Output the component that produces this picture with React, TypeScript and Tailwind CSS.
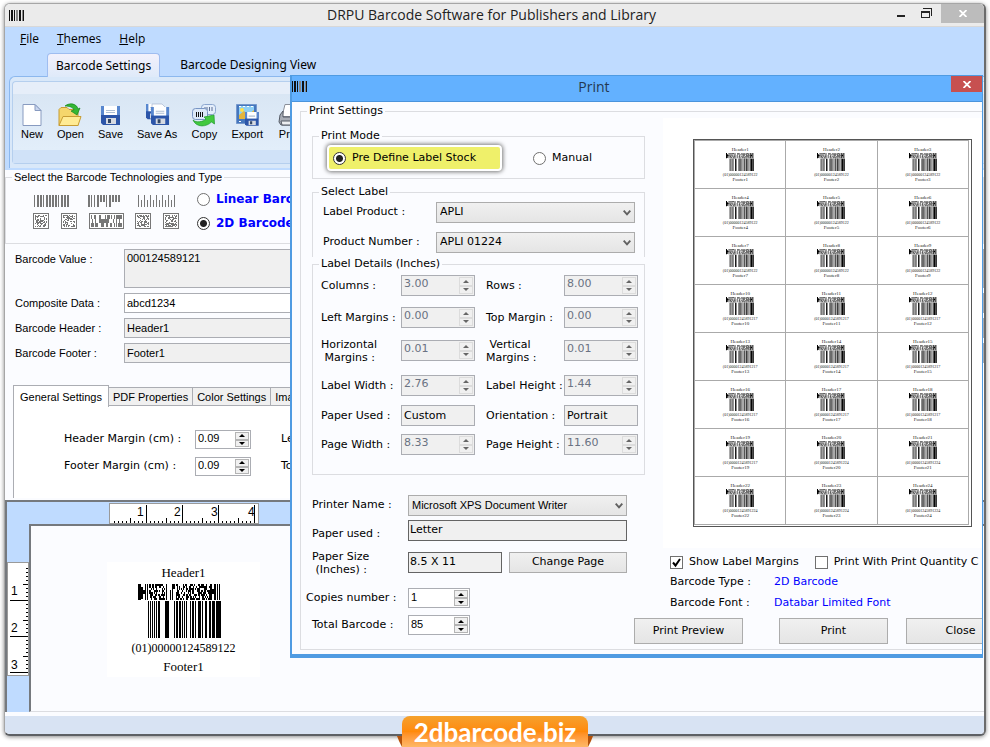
import { useId } from 'react';
import type { ReactNode } from 'react';

// Small deterministic generator so bars and modules stay the same on every render
function sequence(seed: number, count: number) {
  let state = seed * 7919;
  return Array.from({ length: count }, () => {
    state = (state * 16807) % 2147483647;
    return state / 2147483647;
  });
}

function Modules({ seed, cols, rows, x = 0, y = 0, w, h }: { seed: number; cols: number; rows: number; x?: number; y?: number; w: number; h: number }) {
  const cells = sequence(seed, cols * rows);
  return (
    <>
      {cells.map((value, i) =>
        value > 0.45 ? (
          <rect key={i} x={x + (i % cols) * (w / cols)} y={y + Math.floor(i / cols) * (h / rows)} width={w / cols} height={h / rows} />
        ) : null
      )}
    </>
  );
}

const linearBars = [
  [0, 1], [2, 1], [4, 1], [6, 1], [8, 1], [10, 2], [17, 4], [26, 1], [28, 2], [31, 2], [34, 1], [36, 1],
  [38, 1], [42, 1], [44, 2], [47, 1], [50, 3], [54, 1], [57, 2], [61, 2], [64, 3], [68, 4], [72, 1],
];

function CompositeBarcode({ className }: { className: string }) {
  return (
    <svg viewBox="0 0 83 54" preserveAspectRatio="none" className={className} aria-hidden="true">
      <path d="M0 0h3v3h2v3h2v-6h1v16h-1v-6h-2v5h-2v1h-3zM9 0h1v16h-1zM72 0h2v5h2v-5h2v16h-2v-6h-2v6h-2zM79 0h1v16h-1zM81 0h1v16h-1z" />
      <Modules seed={91} cols={16} rows={8} x={11} w={16} h={16} />
      <path d="M28 0h1v16h-1zM32 6h1v10h-1zM34 0h3v5h-2v11h-1z" />
      <Modules seed={44} cols={34} rows={8} x={38} w={34} h={16} />
      {linearBars.map(([x, w]) => (
        <rect key={x} x={x + 10} y={17} width={w} height={37} />
      ))}
    </svg>
  );
}

function AppMark() {
  return (
    <svg width="16" height="11" viewBox="0 0 16 11" shapeRendering="crispEdges" aria-hidden="true">
      <path d="M0 0h1v11h-1zM2 0h2v11h-2zM5 0h1v11h-1zM10 0h2v11h-2zM14 0h1v11h-1z" fill="#111" />
      <path d="M7 0h2v11h-2zM13 0h1v11h-1z" fill="#888" />
    </svg>
  );
}

function Group({ title, className, children }: { title: string; className: string; children: ReactNode }) {
  return (
    <fieldset className={`min-w-0 border-[#dcdde1] ${className}`}>
      <legend className="ml-1.5 px-0.5 leading-[14px] whitespace-nowrap">{title}</legend>
      {children}
    </fieldset>
  );
}

function Spinner({ id, value, className, disabled = false }: { id: string; value: string; className: string; disabled?: boolean }) {
  return (
    <div className={`flex border border-[#abadb3] ${disabled ? 'bg-[#f0f0f0] text-gray-500' : 'bg-white text-black'} ${className}`}>
      <input id={id} defaultValue={value} disabled={disabled} className="min-w-0 flex-1 pb-0.5 pl-0.5 outline-none" />
      <span className="my-px mr-px flex w-3.5 flex-col">
        {['M1 4 4 1 7 4z', 'M1 1 7 1 4 4z'].map((d, i) => (
          <button
            key={d}
            type="button"
            disabled={disabled}
            aria-label={i ? 'Decrease' : 'Increase'}
            className={`flex flex-1 items-center justify-center border bg-[#f0f0f0] ${disabled ? 'border-[#dcdcdc]' : 'border-[#b4b4b4]'}`}
          >
            <svg width="8" height="5" viewBox="0 0 8 5" aria-hidden="true">
              <path d={d} fill={disabled ? '#666' : '#000'} />
            </svg>
          </button>
        ))}
      </span>
    </div>
  );
}

function Dropdown({ id, value, className }: { id: string; value: string; className: string }) {
  return (
    <div className={`relative ${className}`}>
      <select id={id} className="h-full w-full appearance-none border border-[#acacac] bg-linear-to-b from-[#f0f0f0] to-[#e5e5e5] pl-[3px] outline-none">
        <option>{value}</option>
      </select>
      <svg className="pointer-events-none absolute top-2 right-1" width="8" height="6" viewBox="0 0 8 6" aria-hidden="true">
        <path d="M.7 .7 4 4.300 7.300 .7" fill="none" stroke="#606060" strokeWidth="1.900" />
      </svg>
    </div>
  );
}

function Radio({ name, checked = false }: { name: string; checked?: boolean }) {
  return (
    <input
      type="radio"
      name={name}
      defaultChecked={checked}
      className="size-[13px] shrink-0 appearance-none rounded-full border border-[#707070] bg-white checked:border-[#333] checked:bg-[radial-gradient(circle,#222_0_3px,transparent_4px)]"
    />
  );
}

function Floppy({ x = 0, y = 0, s = 1 }: { x?: number; y?: number; s?: number }) {
  return (
    <g transform={`translate(${x} ${y}) scale(${s})`}>
      <path d="M0 0h19v19H2l-2-2z" fill="#2c55a8" />
      <path d="M0 0h19v9H0z" fill="#5887cf" />
      <path d="M3 0h13v9H3z" fill="#fff" />
      <path d="M5 4h9v1H5zM5 6h9v1H5z" fill="#aebfd4" />
      <path d="M5 12h10v6H5z" fill="#d6dae2" />
      <path d="M7 13h3v4H7z" fill="#334766" />
    </g>
  );
}

function NewIcon() {
  return (
    <svg width="22" height="24" viewBox="0 0 22 24" aria-hidden="true">
      <path d="M2 1.500h12l6 6V22.500H2z" fill="#fff" stroke="#889bc0" />
      <path d="M14 1.500v6h6z" fill="#c8d5ee" stroke="#889bc0" />
    </svg>
  );
}

function OpenIcon() {
  return (
    <svg width="26" height="24" viewBox="0 0 26 24" aria-hidden="true">
      <path d="M2 22.500V6.500l2-2h6l2 2h9v16z" fill="#f5d66c" stroke="#c79c33" />
      <path d="M2 22.500 6 13.500h18l-3 9z" fill="#ffeb94" stroke="#c79c33" />
      <path d="M8 3c5-4 12-2 13 3l2-1-3 7-6-4 3-1c-1-3-5-4-9-4z" fill="#35b734" stroke="#16871d" strokeWidth=".7" />
    </svg>
  );
}

function SaveIcon() {
  return (
    <svg width="24" height="24" viewBox="0 0 24 24" aria-hidden="true">
      <Floppy x={3} y={3} />
    </svg>
  );
}

function SaveAsIcon() {
  return (
    <svg width="26" height="24" viewBox="0 0 26 24" aria-hidden="true">
      <Floppy x={2} y={1} s={0.8} />
      <path d="M8 1h10l3 3v5H8z" fill="#fff" stroke="#a8b6ce" strokeWidth=".7" />
      <Floppy x={7} y={4} s={0.95} />
    </svg>
  );
}

function CopyIcon() {
  return (
    <svg width="26" height="24" viewBox="0 0 26 24" aria-hidden="true">
      <rect x="10.500" y="1.500" width="14" height="10" rx="3" fill="#e4eefb" stroke="#8ba6cf" />
      <path d="M14 4v4M16 4v4M18.500 4v4M21 4v4" stroke="#5c6f93" />
      <rect x="1.500" y="5.500" width="15" height="11" rx="3" fill="#dbe8f8" stroke="#7895c4" />
      <path d="M5.500 9v5M7.500 9v5M9.500 9v5M11.500 9v5" stroke="#111" />
      <path d="M2 17c3 3 10 2 13-1l-2-2 10-2 .5 9-3-2c-5 5-15 6-18.500-2z" fill="#43c93f" stroke="#1f9a2d" strokeWidth=".7" />
    </svg>
  );
}

function ExportIcon() {
  return (
    <svg width="24" height="24" viewBox="0 0 24 24" aria-hidden="true">
      <path d="M1.500 1.500h20v19h-20z" fill="#4576bd" stroke="#7598cd" />
      <path d="M4 3h15v13H4z" fill="#8fd0f5" />
      <circle cx="7" cy="7" r="2" fill="#ffe14a" />
      <path d="M4 12l5-4 4 4 6-5v9H4z" fill="#e3b53d" />
      <path d="M4 3h2v1H4zM8 3h2v1H8zM12 3h2v1h-2zM16 3h2v1h-2zM4 18h2v1H4z" fill="#fff" />
      <Floppy x={10} y={9} s={0.72} />
    </svg>
  );
}

function PrinterIcon() {
  return (
    <svg width="26" height="24" viewBox="0 0 26 24" aria-hidden="true">
      <path d="M8 1.500h12l-1 12H5z" fill="#fff" stroke="#8a8f99" />
      <path d="M3 12l3-4v6h14l4-2v7l-3 3H4l-2-3z" fill="#a8adb6" stroke="#555b66" />
      <path d="M4 18h17l-1 4H5z" fill="#eceef1" stroke="#555b66" />
    </svg>
  );
}

const tools = [
  { label: 'New', Icon: NewIcon },
  { label: 'Open', Icon: OpenIcon },
  { label: 'Save', Icon: SaveIcon },
  { label: 'Save As', Icon: SaveAsIcon },
  { label: 'Copy', Icon: CopyIcon },
  { label: 'Export', Icon: ExportIcon },
  { label: 'Print', Icon: PrinterIcon },
];

function Ribbon() {
  return (
    <div className="bg-[#bfdbff] pb-0.5 pl-1">
      <div className="h-[92px] rounded-tl-md border-t border-l border-[#8cb8ee] bg-[#d9e8f9] pt-1 pl-0.5">
        <div className="h-[83px] rounded-l-sm border border-r-0 border-[#b5cfee] bg-linear-to-b from-[#e6eef9] from-[12px] via-[#d9e6f4] via-[12px] to-[#e2eefa] to-[67px]">
          <div className="h-[68px] overflow-hidden pt-[21px] pl-2">
            <div className="flex gap-[14px] font-['Liberation_Sans',sans-serif] text-[11px]">
              {tools.map(({ label, Icon }) => (
                <button key={label} type="button" className="flex shrink-0 flex-col items-center leading-[15px]">
                  <Icon />
                  {label}
                </button>
              ))}
            </div>
          </div>
          <div className="h-[13px] bg-[#d0e2f8]" />
        </div>
      </div>
    </div>
  );
}

function SampleLinear({ seed, width, style }: { seed: number; width: number; style: 'full' | 'mixed' | 'post' }) {
  const heights = sequence(seed, Math.floor(width / 3));
  return (
    <svg width={width} height="12" shapeRendering="crispEdges" fill="#777" aria-hidden="true">
      {heights.map((value, i) => {
        const short = style === 'full' ? false : style === 'mixed' ? value > 0.5 : i % 2 === 1;
        const h = short ? 7 : 12;
        return <rect key={i} x={i * 3} y={style === 'post' ? 12 - h : 0} width={style !== 'post' && value > 0.4 ? 2 : 1} height={h} />;
      })}
    </svg>
  );
}

function SampleMatrix({ seed, width }: { seed: number; width: number }) {
  return (
    <svg width={width} height="16" shapeRendering="crispEdges" fill="#777" aria-hidden="true">
      <rect x=".5" y=".5" width={width - 1} height="15" fill="#fff" stroke="#777" />
      <Modules seed={seed} cols={width - 4} rows={width > 20 ? 3 : 12} x={2} y={2} w={width - 4} h={12} />
    </svg>
  );
}

const dataFields = [
  { label: 'Composite Data :', value: 'abcd1234', tone: 'bg-white' },
  { label: 'Barcode Header :', value: 'Header1', tone: 'bg-[#f0f0f0]' },
  { label: 'Barcode Footer :', value: 'Footer1', tone: 'bg-[#f0f0f0]' },
];

function BarcodeForm() {
  const id = useId();
  return (
    <div className="font-['Liberation_Sans',sans-serif] text-[11px]">
      <Group title="Select the Barcode Technologies and Type" className="h-[74px] border">
        <div className="flex gap-[18px] pt-[7px] pl-[27px]">
          <div className="flex w-[146px] flex-col gap-1.5 pt-1">
            <div className="flex justify-between pl-px">
              <SampleLinear seed={3} width={37} style="full" />
              <SampleLinear seed={8} width={34} style="mixed" />
              <SampleLinear seed={5} width={41} style="post" />
            </div>
            <div className="flex justify-between">
              <SampleMatrix seed={11} width={16} />
              <SampleMatrix seed={12} width={16} />
              <SampleMatrix seed={13} width={35} />
              <SampleMatrix seed={14} width={16} />
              <SampleMatrix seed={15} width={16} />
            </div>
          </div>
          <div className="flex flex-col gap-2 font-['DejaVu_Sans',sans-serif] text-xs leading-4 font-bold text-[#0000ff]">
            <label className="flex items-center gap-1.5"><Radio name="technology" />Linear Barcode</label>
            <label className="flex items-center gap-1.5"><Radio name="technology" checked />2D Barcode</label>
          </div>
        </div>
      </Group>
      <div className="flex flex-col gap-[5px] pt-[5px] pl-2.5">
        <div className="flex h-[39px]">
          <label htmlFor={`${id}-value`} className="w-[109px] shrink-0 pt-0.5">Barcode Value :</label>
          <textarea id={`${id}-value`} defaultValue="000124589121" className="flex-1 resize-none border border-[#abadb3] bg-[#f0f0f0] pl-0.5 leading-[17px] outline-none" />
        </div>
        {dataFields.map((field) => (
          <div key={field.label} className="flex h-5 items-center">
            <label htmlFor={`${id}-${field.value}`} className="w-[109px] shrink-0">{field.label}</label>
            <input id={`${id}-${field.value}`} defaultValue={field.value} className={`h-full flex-1 border border-[#abadb3] pl-0.5 outline-none ${field.tone}`} />
          </div>
        ))}
      </div>
    </div>
  );
}

function SettingsTabs() {
  const id = useId();
  return (
    <div className="pt-[22px] pl-2">
      <div className="flex items-end font-['Liberation_Sans',sans-serif] text-[11px] leading-4">
        <button type="button" className="relative z-10 -mb-px h-[22px] border border-b-0 border-[#abadb3] bg-white px-[6px]">General Settings</button>
        {['PDF Properties', 'Color Settings', 'Image'].map((tab) => (
          <button key={tab} type="button" className="h-[19px] border border-l-0 border-[#abadb3] bg-[#f0f0f0] px-1">{tab}</button>
        ))}
      </div>
      <div className="flex h-[92px] flex-col gap-2 border-l border-[#abadb3] bg-white pt-6 pl-[50px] text-[11px]">
        {[['Header Margin (cm) :', 'Le'], ['Footer Margin (cm) :', 'To']].map(([label, next]) => (
          <div key={label} className="flex h-[19px] items-center">
            <label htmlFor={`${id}-${next}`} className="w-[131px]">{label}</label>
            <Spinner id={`${id}-${next}`} value="0.09" className="h-full w-14 font-['Liberation_Sans',sans-serif]" />
            <span className="pl-[30px]">{next}</span>
          </div>
        ))}
      </div>
    </div>
  );
}

function DesignArea() {
  return (
    <div className="mt-0.5 flex min-h-0 flex-1 border-t-2 border-l-2 border-[#75797e] bg-[#bfdbff] text-xs">
      <svg width="22" height="114" className="mt-[60px] shrink-0" shapeRendering="crispEdges" aria-hidden="true">
        <rect x=".5" y=".5" width="21" height="113" fill="#fff" stroke="#9a9a9a" />
        {Array.from({ length: 27 }, (_, i) => {
          const len = i % 9 === 8 ? 18 : i % 9 === 4 ? 5 : 2;
          return <rect key={i} x={21 - len} y={6 + i * 4} width={len} height="1" />;
        })}
        {[1, 2, 3].map((n) => (
          <text key={n} x="4" y={n * 37 - 4} fontSize="12" fontFamily="Liberation Sans">{n}</text>
        ))}
      </svg>
      <div className="flex min-w-0 flex-1 flex-col pt-px">
        <svg width="150" height="21" className="ml-20 shrink-0" shapeRendering="crispEdges" aria-hidden="true">
          <rect x=".5" y=".5" width="149" height="20" fill="#fff" stroke="#9a9a9a" />
          {Array.from({ length: 36 }, (_, i) => {
            const len = i % 9 === 8 ? 18 : i % 9 === 4 ? 5 : 2;
            return <rect key={i} x={5 + i * 4} y={20 - len} width="1" height={len} />;
          })}
          {[1, 2, 3, 4].map((n) => (
            <text key={n} x={n * 37 - 9} y="13" fontSize="12" fontFamily="Liberation Sans">{n}</text>
          ))}
        </svg>
        <div className="flex-1 border-t-2 border-b border-l-2 border-[#75797e] border-b-[#dcdde1] bg-[#fbfcff] pt-9 pl-[76px]">
          <div className="flex h-[115px] w-[153px] flex-col items-center bg-white pt-1 font-['Liberation_Serif',serif] text-[13px] leading-[14px]">
            <span>Header1</span>
            <CompositeBarcode className="mt-1 mr-2 h-[54px] w-[83px]" />
            <span className="mt-0.5 text-xs">(01)00000124589122</span>
            <span className="mt-1">Footer1</span>
          </div>
        </div>
      </div>
    </div>
  );
}

const details = [
  ['Columns :', '3.00', 'Rows :', '8.00'],
  ['Left Margins :', '0.00', 'Top Margin :', '0.00'],
  ['Horizontal\n\u00a0Margins :', '0.01', '\u00a0Vertical\nMargins :', '0.01'],
  ['Label Width :', '2.76', 'Label Height :', '1.44'],
  ['Paper Used :', 'Custom', 'Orientation :', 'Portrait'],
  ['Page Width :', '8.33', 'Page Height :', '11.60'],
];

function DetailCell({ label, value }: { label: string; value: string }) {
  const id = useId();
  return (
    <>
      <label htmlFor={id} className="flex h-[21px] items-center leading-[13px] whitespace-pre">{label}</label>
      {/^\d/.test(value) ? (
        <Spinner id={id} value={value} disabled className="h-[21px] w-[74px]" />
      ) : (
        <input id={id} defaultValue={value} className="h-[21px] w-[74px] border border-[#abadb3] bg-[#f0f0f0] pl-0.5 outline-none" />
      )}
    </>
  );
}

function LabelSettings() {
  const id = useId();
  return (
    <div className="w-[333px] shrink-0 pt-[11px]">
      <Group title="Print Mode" className="h-[50px] border">
        <div className="flex items-center gap-[31px] pt-[2px] pl-3.5">
          <label className="flex h-[26px] w-[175px] items-center gap-1.5 rounded-sm border-2 border-white bg-[#eff06a] pl-1 shadow-[0_0_4px_1px_#777]">
            <Radio name="mode" checked />Pre Define Label Stock
          </label>
          <label className="flex items-center gap-1.5"><Radio name="mode" />Manual</label>
        </div>
      </Group>
      <Group title="Select Label" className="mt-1.5 h-[72px] border border-b-0">
        <div className="flex flex-col gap-[9px] pt-[3px] pr-[9px] pl-2.5">
          {[['Label Product :', 'APLI'], ['Product Number :', 'APLI 01224']].map(([label, value]) => (
            <div key={label} className="flex items-center">
              <label htmlFor={`${id}-${value}`} className="w-[113px]">{label}</label>
              <Dropdown id={`${id}-${value}`} value={value} className="h-[21px] flex-1" />
            </div>
          ))}
        </div>
      </Group>
      <Group title="Label Details (Inches)" className="h-[218px] border">
        <div className="grid grid-cols-[80px_85px_78px_74px] grid-rows-[32px_33px_35px_30px_29px_21px] items-start pt-1 pl-2">
          {details.map(([a, av, b, bv]) => [
            <DetailCell key={a} label={a} value={av} />,
            <DetailCell key={b} label={b} value={bv} />,
          ])}
        </div>
      </Group>
      <div className="grid grid-cols-[96px_219px] grid-rows-[25px_32px_21px] items-start pt-5">
        <label htmlFor={`${id}-printer`} className="pt-0.5">Printer Name :</label>
        <Dropdown id={`${id}-printer`} value="Microsoft XPS Document Writer" className="h-[21px] font-['Liberation_Sans',sans-serif]" />
        <label htmlFor={`${id}-paper`} className="pt-1.5">Paper used :</label>
        <input id={`${id}-paper`} defaultValue="Letter" className="h-[21px] border border-[#646464] bg-[#f0f0f0] pb-0.5 pl-px outline-none" />
        <label htmlFor={`${id}-size`} className="-mt-0.5 leading-[13px]">Paper Size<br />&nbsp;(Inches) :</label>
        <div className="flex gap-[7px]">
          <input id={`${id}-size`} defaultValue="8.5 X 11" className="h-[21px] w-[94px] border border-[#646464] bg-[#f0f0f0] pb-0.5 pl-px outline-none" />
          <button type="button" className="h-[21px] flex-1 border border-[#acacac] bg-linear-to-b from-[#f0f0f0] to-[#e5e5e5]">Change Page</button>
        </div>
      </div>
      <div className="grid grid-cols-[96px_62px] items-center gap-y-[7px] pt-[15px]">
        <label htmlFor={`${id}-copies`} className="-ml-1.5">Copies number :</label>
        <Spinner id={`${id}-copies`} value="1" className="h-5 font-['Liberation_Sans',sans-serif]" />
        <label htmlFor={`${id}-total`}>Total Barcode :</label>
        <Spinner id={`${id}-total`} value="85" className="h-5 font-['Liberation_Sans',sans-serif]" />
      </div>
    </div>
  );
}

function codeFor(n: number) {
  if (n < 10) return '(01)00000124589122';
  return n < 20 ? '(01)00001245891217' : '(01)00001245891224';
}

function PrintPreview() {
  return (
    <div className="flex min-w-0 flex-1 flex-col">
      <div className="ml-[18px] h-[430px] bg-white pt-[21px] pl-[30px]">
        <div className="h-[388px] w-[279px] border border-[#555] pr-0.5 pb-0.5">
          <div className="grid grid-cols-3 border-r border-b border-[#aaa]">
            {Array.from({ length: 24 }, (_, i) => i + 1).map((n) => (
              <div key={n} className="flex h-12 flex-col items-center border-t border-l border-[#aaa] pt-1.5 font-['Liberation_Serif',serif] text-[5px] leading-[5px] text-[#222]">
                <span>Header{n}</span>
                <CompositeBarcode className="my-px h-[18px] w-7" />
                <span className="text-[4px]">{codeFor(n)}</span>
                <span>Footer{n}</span>
              </div>
            ))}
          </div>
        </div>
      </div>
      <div className="flex flex-col gap-1 pt-1.5 pl-[25px] whitespace-nowrap">
        <div className="flex h-4 gap-4">
          {['Show Label Margins', 'Print With Print Quantity C'].map((label, i) => (
            <label key={label} className="flex items-center gap-1.5">
              <span className="relative flex">
                <input type="checkbox" defaultChecked={i === 0} className="size-[13px] appearance-none border border-[#707070] bg-white peer" />
                <svg className="pointer-events-none absolute inset-0 hidden peer-checked:block" width="13" height="13" viewBox="0 0 13 13" aria-hidden="true">
                  <path d="M3 6.500l2.500 3L10 3" fill="none" stroke="#000" strokeWidth="2" />
                </svg>
              </span>
              {label}
            </label>
          ))}
        </div>
        <dl className="grid grid-cols-[104px_1fr] gap-y-[5px] leading-4">
          <dt>Barcode Type :</dt>
          <dd className="text-[#0000ff]">2D Barcode</dd>
          <dt>Barcode Font :</dt>
          <dd className="text-[#0000ff]">Databar Limited Font</dd>
        </dl>
      </div>
      <div className="mt-[7px] -ml-[11px] flex">
        {[['Print Preview', 'mr-9'], ['Print', 'mr-[18px]'], ['Close', '']].map(([label, gap]) => (
          <button key={label} type="button" className={`h-[26px] w-[109px] shrink-0 border border-[#acacac] bg-linear-to-b from-[#f0f0f0] to-[#e5e5e5] ${gap}`}>
            {label}
          </button>
        ))}
      </div>
    </div>
  );
}

function PrintDialog() {
  return (
    <section
      role="dialog"
      aria-labelledby="print-title"
      className="absolute top-[75px] right-[7px] left-[290px] flex flex-col overflow-hidden border-t border-r border-b-4 border-l-2 border-[#4f9be2] bg-[#fbfcff] text-[11px] whitespace-nowrap"
    >
      <header className="relative flex h-[26px] items-center justify-center border-b border-[#4a94dc] bg-[#63b1ff] pr-[86px] pb-1">
        <span className="absolute top-[5px] left-0"><AppMark /></span>
        <h2 id="print-title" className="font-['Open_Sans',sans-serif] text-sm text-[#24384f]">Print</h2>
        <button type="button" aria-label="Close" className="absolute top-0 right-0 flex h-4 w-[31px] items-center justify-center bg-[#c75050]">
          <svg width="8" height="7" viewBox="0 0 8 7" aria-hidden="true">
            <path d="M.5 0l7 7M7.500 0l-7 7" stroke="#fff" strokeWidth="1.800" />
          </svg>
        </button>
      </header>
      <Group title="Print Settings" className="mt-0.5 mb-1 ml-2 h-[546px] border border-r-0">
        <div className="flex pl-[11px]">
          <LabelSettings />
          <PrintPreview />
        </div>
      </Group>
    </section>
  );
}

function TitleBar() {
  return (
    <header className="relative flex h-[23px] shrink-0 items-center justify-center border-b border-[#d8d8d8] bg-[#ebebeb] pr-1.5">
      <span className="absolute left-1"><AppMark /></span>
      <h1 className="font-['Open_Sans',sans-serif] text-sm text-[#222]">DRPU Barcode Software for Publishers and Library</h1>
      <div className="absolute top-0 right-0 flex h-[19px] items-center">
        <button type="button" aria-label="Minimize" className="px-2">
          <svg width="9" height="10" aria-hidden="true"><path d="M1 6h8v2H1z" fill="#222" /></svg>
        </button>
        <button type="button" aria-label="Restore" className="mr-px px-2">
          <svg width="11" height="11" viewBox="0 0 11 11" fill="none" stroke="#222" shapeRendering="crispEdges" aria-hidden="true">
            <path d="M2 .5h8.500V8" />
            <path d="M.5 3h8v6.500h-8zM.5 4h8" />
          </svg>
        </button>
        <button type="button" aria-label="Close" className="flex h-full w-[43px] items-center justify-center bg-[#bcbcbc]">
          <svg width="8" height="7" viewBox="0 0 8 7" aria-hidden="true">
            <path d="M.5 0l7 7M7.500 0l-7 7" stroke="#fff" strokeWidth="1.800" />
          </svg>
        </button>
      </div>
    </header>
  );
}

export default function App() {
  return (
    <div className="relative h-screen min-h-[747px] overflow-hidden bg-white px-1 pt-[3px] pb-[11px] font-['DejaVu_Sans',sans-serif] text-black">
      <main className="flex h-full flex-col overflow-hidden rounded-md border border-r-2 border-b-2 border-[#a6a6a6] border-r-[#6b6b6b] border-b-[#5d6064] bg-[#fbfcff] shadow-[0_1px_4px_#888]">
        <TitleBar />
        <nav className="flex h-[23px] shrink-0 items-center gap-[18px] bg-[#bfdbff] pl-[15px] font-['Open_Sans',sans-serif] text-xs">
          {['File', 'Themes', 'Help'].map((item) => (
            <a key={item} href="#"><span className="underline">{item[0]}</span>{item.slice(1)}</a>
          ))}
        </nav>
        <div className="flex h-[26px] shrink-0 items-end gap-3 bg-[#bfdbff] pl-[42px] font-['Noto_Sans',sans-serif] text-xs">
          <button type="button" className="relative z-10 -mb-px h-6 rounded-t border border-b-0 border-[#9fbdf0] bg-linear-to-b from-[#f2f1fc] to-[#dfeaf9] px-2">Barcode Settings</button>
          <button type="button" className="h-[22px] px-2">Barcode Designing View</button>
        </div>
        <Ribbon />
        <BarcodeForm />
        <SettingsTabs />
        <DesignArea />
        <footer className="mt-1 h-[18px] shrink-0 bg-[#d8e3f3]" />
      </main>
      <PrintDialog />
      <div className="absolute bottom-0 left-1/2 flex -translate-x-1/2 items-end">
        <svg width="5" height="11" viewBox="0 0 5 11" aria-hidden="true">
          <path d="M0 0h5v11L2 5z" fill="#b5520a" />
        </svg>
        <a href="#" className="flex h-[31px] w-[186px] items-center justify-center rounded-t-lg bg-linear-to-b from-[#f5a12c] via-[#ff8a0a] to-[#ffb866] font-['Lato','Open_Sans',sans-serif] text-[26px] leading-none font-bold text-white">
          2dbarcode.biz
        </a>
        <svg width="5" height="11" viewBox="0 0 5 11" aria-hidden="true">
          <path d="M0 0h5L3 5 0 11z" fill="#b5520a" />
        </svg>
      </div>
    </div>
  );
}
